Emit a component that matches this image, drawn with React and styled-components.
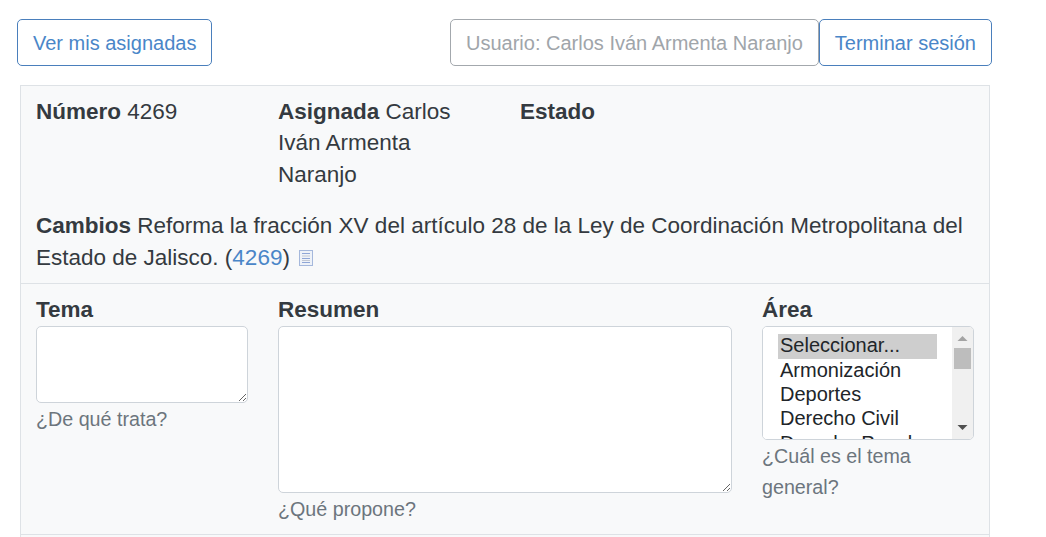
import React from 'react'
import styled, { createGlobalStyle } from 'styled-components'

const GlobalStyle = createGlobalStyle`
    * {
        box-sizing: border-box;
    }
    body {
        margin: 0;
        background: #fff;
        color: #343a40;
        font-family: "Liberation Sans", Arial, sans-serif;
        font-size: 22.5px;
        line-height: 31.4px;
        overflow: hidden;
    }
`

const Page = styled.div`
    width: 1046px;
    height: 537px;
    padding: 19px 54px 0 17px;
    overflow: hidden;
`

const Toolbar = styled.div`
    display: flex;
    justify-content: space-between;
    margin-bottom: 19px;
`

const Group = styled.div`
    display: flex;
`

const OutlineButton = styled.button`
    height: 47px;
    padding: 2px 15px 0;
    background: #fff;
    border: 1px solid ${({ $muted }) => ($muted ? '#a3a8ad' : '#4a7fbc')};
    border-radius: 5px;
    color: ${({ $muted }) => ($muted ? '#a0a5aa' : '#4a86c8')};
    font: inherit;
    font-size: 20px;
    cursor: ${({ $muted }) => ($muted ? 'default' : 'pointer')};
`

const Card = styled.section`
    margin: 0 2px 0 3px;
    background: #f8f9fa;
    border: 1px solid #dee2e6;
`

const Block = styled.div`
    padding: ${({ $top }) => $top ?? 10}px 0 ${({ $bottom }) => $bottom ?? 0}px;
    border-bottom: ${({ $divided }) => ($divided ? '1px solid #dee2e6' : 'none')};
`

const Columns = styled.div`
    display: grid;
    grid-template-columns: ${({ $wide }) => ($wide ? '3fr 6fr 3fr' : '3fr 3fr 3fr 3fr')};
`

const Cell = styled.div`
    padding: 0 15px;
    min-width: 0;
`

const Note = styled.p`
    margin: 19px 0 10px;
    padding: 0 15px;
`

const Strong = styled.strong`
    font-weight: 700;
`

const TextLink = styled.a`
    color: #4a86c8;
    text-decoration: none;
`

const DocIcon = styled.svg`
    display: inline-block;
    width: 14px;
    height: 16px;
    margin-left: 9px;
    vertical-align: -1px;
`

const Label = styled.label`
    display: block;
    margin-bottom: 1px;
    font-weight: 700;
`

const Area = styled.textarea`
    display: block;
    width: 100%;
    height: ${({ $tall }) => ($tall ? 167 : 77)}px;
    background: #fff;
    border: 1px solid #ced4da;
    border-radius: 5px;
    font: inherit;
`

const Hint = styled.small`
    display: block;
    margin-top: 1px;
    color: #6c757d;
    font-size: 19.7px;
    line-height: 31px;
`

const ListFrame = styled.div`
    display: flex;
    height: 114px;
    background: #fff;
    border: 1px solid #ced4da;
    border-radius: 5px;
    overflow: hidden;
`

const ListBox = styled.select`
    flex: 1;
    min-width: 0;
    padding: 7px 15px 0;
    background: #fff;
    border: 0;
    outline: none;
    color: #212529;
    font-family: inherit;
    font-size: 20px;
    overflow: hidden;
`

const Choice = styled.option`
    height: 24.3px;
    min-height: 24.3px;
    padding: 0 2px;
    line-height: 24.3px;

    &:checked {
        background: linear-gradient(#cecece, #cecece);
        color: #212529;
    }
`

const Rail = styled.div`
    display: flex;
    flex: none;
    flex-direction: column;
    align-items: center;
    width: 21px;
    background: #f0f0f0;
`

const RailStep = styled.svg`
    flex: none;
    width: 21px;
    height: 21px;
`

const Thumb = styled.div`
    width: 17px;
    height: 21px;
    margin-bottom: auto;
    background: #bdbdbd;
`

const areas = [
    'Seleccionar...',
    'Armonización',
    'Deportes',
    'Derecho Civil',
    'Derecho Penal',
    'Desarrollo Urbano',
    'Educación',
    'Electoral',
    'Hacienda',
    'Medio Ambiente',
    'Movilidad',
    'Salud',
    'Seguridad',
    'Transparencia',
    'Turismo',
    'Otros',
]

export default function App() {
    return (
        <Page>
            <GlobalStyle />
            <Toolbar>
                <OutlineButton>Ver mis asignadas</OutlineButton>
                <Group>
                    <OutlineButton $muted>Usuario: Carlos Iván Armenta Naranjo</OutlineButton>
                    <OutlineButton>Terminar sesión</OutlineButton>
                </Group>
            </Toolbar>
            <Card>
                <Block>
                    <Columns>
                        <Cell><Strong>Número</Strong> 4269</Cell>
                        <Cell><Strong>Asignada</Strong> Carlos Iván Armenta Naranjo</Cell>
                        <Cell><Strong>Estado</Strong></Cell>
                    </Columns>
                </Block>
                <Block $top={1} $divided>
                    <Note>
                        <Strong>Cambios</Strong> Reforma la fracción XV del artículo 28 de la Ley de Coordinación Metropolitana del Estado de Jalisco. (<TextLink href="#">4269</TextLink>)
                        <DocIcon viewBox="0 0 14 16" aria-hidden="true">
                            <rect x="0.5" y="0.5" width="13" height="15" fill="#eef2f8" stroke="#a5b8dc" />
                            <path d="M3 3.5h8M3 8.5h8M3 12.5h8" stroke="#8fa6d6" strokeWidth="1" />
                            <path d="M3 6h8M3 10.5h8" stroke="#c2c8d4" strokeWidth="1" />
                        </DocIcon>
                    </Note>
                </Block>
                <Block $top={10} $bottom={9} $divided>
                    <Columns $wide>
                        <Cell>
                            <Label>Tema</Label>
                            <Area />
                            <Hint>¿De qué trata?</Hint>
                        </Cell>
                        <Cell>
                            <Label>Resumen</Label>
                            <Area $tall />
                            <Hint>¿Qué propone?</Hint>
                        </Cell>
                        <Cell>
                            <Label>Área</Label>
                            <ListFrame>
                                <ListBox size={4} defaultValue="Seleccionar...">
                                    {areas.map(area => <Choice key={area}>{area}</Choice>)}
                                </ListBox>
                                <Rail aria-hidden="true">
                                    <RailStep viewBox="0 0 21 21">
                                        <path d="M10.5 9L15.5 14H5.5Z" fill="#a3a3a3" />
                                    </RailStep>
                                    <Thumb />
                                    <RailStep viewBox="0 0 21 21">
                                        <path d="M10.5 12L15.5 7H5.5Z" fill="#505050" />
                                    </RailStep>
                                </Rail>
                            </ListFrame>
                            <Hint>¿Cuál es el tema general?</Hint>
                        </Cell>
                    </Columns>
                </Block>
                <Block $top={40} />
            </Card>
        </Page>
    )
}
